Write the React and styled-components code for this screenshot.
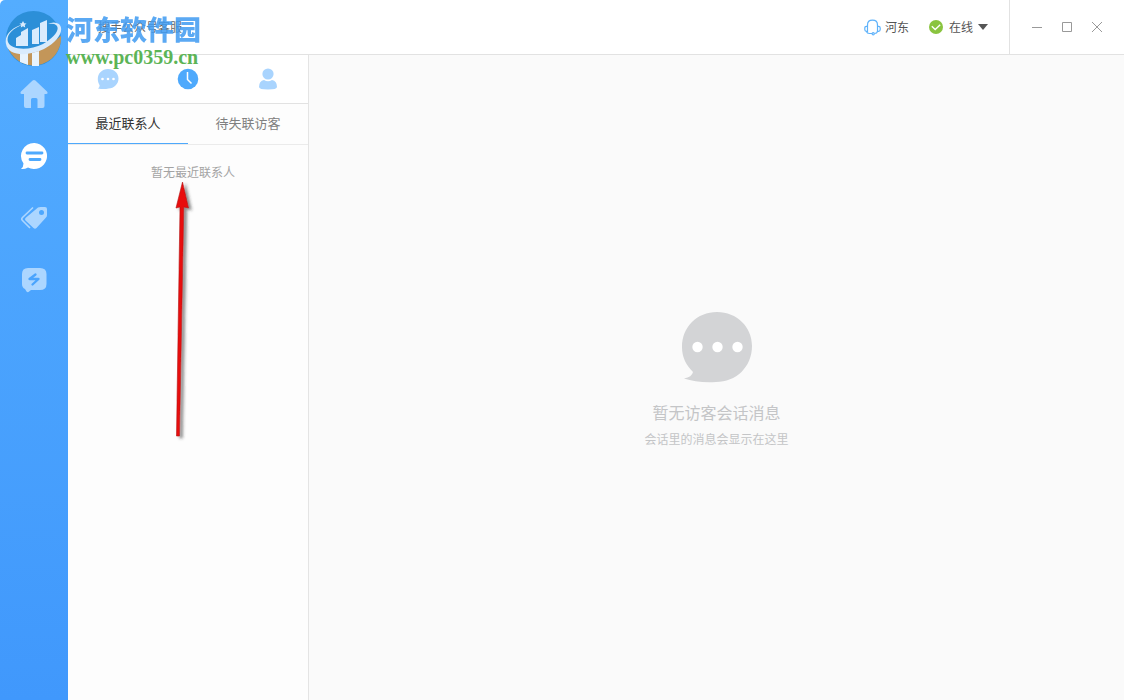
import React from "react";
import styled, { createGlobalStyle } from "styled-components";

const Global = createGlobalStyle`
  * { box-sizing: border-box; }
  html, body, #root { margin: 0; height: 100%; }
  body {
    font-family: "Noto Sans CJK SC", sans-serif;
    font-size: 12px;
    background: #fff;
    overflow: hidden;
  }
  button, select { font-family: inherit; }
  button { border: 0; padding: 0; background: none; cursor: pointer; }
`;

const Shell = styled.div`
  position: relative;
  display: flex;
  min-height: 100vh;
`;

const Sidebar = styled.nav`
  display: flex;
  flex-direction: column;
  align-items: center;
  gap: 30px;
  flex: 0 0 68px;
  padding-top: 78px;
  background: linear-gradient(#54adff, #4098fc);
  border-top-left-radius: 5px;
`;

const NavButton = styled.button`
  display: grid;
  place-items: center;
  width: 32px;
  height: 32px;
  color: ${(p) => (p.$active ? "#fff" : "#acd6ff")};
`;

const Main = styled.div`
  display: flex;
  flex-direction: column;
  flex: 1;
`;

const Header = styled.header`
  display: flex;
  align-items: center;
  height: 55px;
  padding-left: 30px;
  border-bottom: 1px solid #e2e2e2;
  background: #fff;
  color: #555;
`;

const Title = styled.h1`
  margin: 0;
  font-size: 12px;
  font-weight: 400;
  line-height: 18px;
  color: #666;
`;

const Account = styled.div`
  display: flex;
  align-items: center;
  gap: 20px;
  margin-left: auto;
  padding-right: 21px;
`;

const AccountItem = styled.div`
  display: flex;
  align-items: center;
  gap: 4px;
  line-height: 18px;
`;

const Status = styled.select`
  appearance: none;
  border: 0;
  padding: 0 16px 0 0;
  margin-left: 2px;
  width: 41px;
  height: 18px;
  font-size: 12px;
  line-height: 16px;
  color: #555;
  background: none;
`;

const StatusWrap = styled.div`
  display: flex;
  align-items: center;
  svg { margin-left: -12px; pointer-events: none; }
`;

const WindowControls = styled.div`
  display: flex;
  align-items: center;
  justify-content: center;
  align-self: stretch;
  gap: 10px;
  width: 115px;
  border-left: 1px solid #e2e2e2;
`;

const WindowButton = styled.button`
  display: grid;
  place-items: center;
  width: 20px;
  height: 20px;
  color: #999;
`;

const Body = styled.div`
  display: flex;
  flex: 1;
`;

const ContactPanel = styled.aside`
  flex: 0 0 241px;
  border-right: 1px solid #e4e4e4;
  background: #fdfdfd;
`;

const IconTabs = styled.div`
  display: grid;
  grid-template-columns: repeat(3, 1fr);
  height: 49px;
  border-bottom: 1px solid #e2e2e2;
  background: #fff;
`;

const IconTab = styled.button`
  display: grid;
  place-items: center;
  color: ${(p) => (p.$active ? "#4ea9fc" : "#a9d4fe")};
`;

const TextTabs = styled.div`
  display: grid;
  grid-template-columns: 1fr 1fr;
  height: 41px;
  border-bottom: 1px solid #ebebeb;
`;

const TextTab = styled.button`
  padding-bottom: 2px;
  font-size: 13px;
  line-height: 20px;
  color: ${(p) => (p.$active ? "#333" : "#808080")};
  box-shadow: ${(p) => (p.$active ? "inset 0 -1px #4ea9fc" : "none")};
`;

const NoContacts = styled.p`
  margin: 0;
  padding: 18px 0 0 10px;
  text-align: center;
  line-height: 18px;
  color: #a3a3a3;
`;

const Conversation = styled.main`
  display: flex;
  flex-direction: column;
  align-items: center;
  justify-content: center;
  flex: 1;
  padding-top: 4px;
  background: #fafafa;
  color: #c4c5c7;
`;

const EmptyTitle = styled.h2`
  margin: 17px 0 5px;
  font-size: 16px;
  font-weight: 400;
  line-height: 24px;
`;

const EmptyHint = styled.p`
  margin: 0;
  line-height: 20px;
`;

const Watermark = styled.div`
  position: absolute;
  top: 10px;
  left: 4px;
  display: flex;
  pointer-events: none;
`;

const WatermarkText = styled.div`
  display: flex;
  flex-direction: column;
  margin-left: 3px;
`;

const SiteName = styled.span`
  font-size: 27px;
  font-weight: 900;
  line-height: 37px;
  color: #3f9bf2;
  opacity: 0.85;
`;

const SiteUrl = styled.span`
  font-family: "Liberation Serif", serif;
  font-size: 20px;
  font-weight: 700;
  line-height: 20px;
  color: #5cb456;
`;

const Arrow = styled.svg`
  position: absolute;
  top: 179px;
  left: 168px;
  pointer-events: none;
`;

const SiteLogo = () => (
  <svg width="59" height="59" viewBox="0 0 59 59" aria-hidden="true">
    <circle cx="29.5" cy="28.5" r="27.5" fill="#2c8fd8" />
    <path d="M3 35C14 46 38 42 57 26A27.5 27.5 0 0 1 3 35Z" fill="#c39659" />
    <path d="M12 28L17 25V22L24 18V36H12ZM28 20L35 17V34H28ZM36 13L43 10V32H36Z" fill="#d9ebfd" />
    <path d="M16 43H24V55L16 52ZM28 43L35 41V56H28Z" fill="#e8f3fd" />
    <path d="M20 14C7 19 2 26 4 32C7 40 25 41 39 34C50 28 57 19 52 15Q50 13 44 14Q50 11 55 14C61 20 54 32 40 39C23 47 4 46 2 34C0 25 8 17 20 14Z" fill="#d9ebfd" />
    <path d="M19 11L20.2 13.2L22.5 13.5L20.8 15L21.2 17.5L19 16.3L16.8 17.5L17.2 15L15.5 13.5L17.8 13.2Z" fill="#d9ebfd" />
  </svg>
);

const HomeIcon = () => (
  <svg width="28" height="28" viewBox="0 0 28 28" fill="currentColor">
    <path d="M12.6.6Q14-.6 15.4.6L27 11.5Q28.500 14 26 14H24.500V26Q24.500 28 22.500 28H17.500V19.500Q17.500 18 16 18H12.500Q11 18 11 19.500V28H6Q4 28 4 26V14H2Q-.5 14 1 11.500Z" />
  </svg>
);

const MessageIcon = () => (
  <svg width="28" height="28" viewBox="0 0 28 28">
    <path d="M14.500 1A13 13 0 1 1 8 25.500Q4.500 27.500 1 27Q3.500 25 3.500 21.500A13 13 0 0 1 14.500 1Z" fill="currentColor" />
    <path d="M7 11H22M10 17.500H20" stroke="#4faafe" strokeWidth="2.800" strokeLinecap="round" />
  </svg>
);

const TagsIcon = () => (
  <svg width="28" height="28" viewBox="0 0 28 28">
    <path d="M18 3.500Q19 3 20.500 3H25Q27 3 27 5V11Q27 12.500 26 13.500L16.500 24Q15 25.500 13.500 24L5.500 16.500Q4.500 15 5.500 14Z" fill="currentColor" />
    <path d="M13 3.500L2.500 13.500Q1 15 2.500 16.500L10 24" fill="none" stroke="currentColor" strokeWidth="1.600" />
    <circle cx="21.5" cy="8.500" r="2.500" fill="#4da7fe" />
  </svg>
);

const QuickReplyIcon = () => (
  <svg width="28" height="28" viewBox="0 0 28 28">
    <path d="M8 2H20Q26.500 2 26.500 8V18Q26.500 24 20 24H11L8.500 26Q7.500 26.500 6.500 25.500L5 23Q2 21.500 2 18V8Q2 2 8 2Z" fill="currentColor" />
    <path d="M15.500 8.500L9.500 13H18.500L12.500 18.500" fill="none" stroke="#4aa4fd" strokeWidth="2.300" strokeLinejoin="round" strokeLinecap="round" />
  </svg>
);

const ChatIcon = () => (
  <svg width="22" height="22" viewBox="0 0 22 22">
    <path d="M11 1C17 1 21.500 5 21.500 10.500S17 20.500 11.500 20.500Q7 21.500 1 20.500Q3 19 2.500 17C-2 9 3 1 11 1Z" fill="currentColor" />
    <g fill="#fff"><circle cx="5.500" cy="11" r="1.300" /><circle cx="11" cy="11" r="1.300" /><circle cx="16.500" cy="11" r="1.300" /></g>
  </svg>
);

const ClockIcon = () => (
  <svg width="22" height="22" viewBox="0 0 22 22">
    <circle cx="11" cy="11" r="10.300" fill="currentColor" />
    <path d="M10.500 4V11.500L14.500 15.500" fill="none" stroke="#fff" strokeWidth="1.500" />
  </svg>
);

const PersonIcon = () => (
  <svg width="22" height="22" viewBox="0 0 22 22" fill="currentColor">
    <circle cx="11" cy="6" r="5.600" />
    <path d="M7 12Q11 14.500 15 12Q20 13 20 19Q20 21.500 11 21.500T2 19Q2 13 7 12Z" />
  </svg>
);

const HeadsetIcon = () => (
  <svg width="17" height="17" viewBox="0 0 17 17" fill="none" stroke="#5eb2fa" strokeWidth="1.200">
    <path d="M3.500 7V6C3.500 3 5.500 1.200 8.500 1.200S13.500 3 13.500 6V7" />
    <path d="M3.500 7.300H2.500Q.8 7.300 .8 9V10.500Q.8 12.300 2.500 12.300H3.500ZM13.500 7.300H14.500Q16.200 7.300 16.200 9V10.500Q16.200 12.300 14.500 12.300H13.500Z" />
    <path d="M2.500 12.500Q3 14.500 5.500 14.500H8M13.500 12.500Q13 14.500 10.500 14.500" />
    <circle cx="9.200" cy="14.800" r="1.100" />
  </svg>
);

const OnlineIcon = () => (
  <svg width="14" height="14" viewBox="0 0 14 14">
    <circle cx="7" cy="7" r="7" fill="#8ac43f" />
    <path d="M2.800 6.300L6.200 9.500L11.200 4.800" fill="none" stroke="#fff" strokeWidth="1.400" />
  </svg>
);

const EmptyChatIcon = () => (
  <svg width="72" height="72" viewBox="0 0 72 72">
    <path d="M36 1C56 1 71 16 71 35C71 56 55 71 35 71Q16 72 3 67.500Q11 66 12 61C5 54 1 46 1 36C1 16 16 1 36 1Z" fill="#d3d4d6" />
    <g fill="#fff"><circle cx="16.500" cy="36" r="5.200" /><circle cx="36.500" cy="36" r="5.200" /><circle cx="56.500" cy="36" r="5.200" /></g>
  </svg>
);

const navItems = [
  { label: "首页", Icon: HomeIcon },
  { label: "会话", Icon: MessageIcon, active: true },
  { label: "标签", Icon: TagsIcon },
  { label: "快捷回复", Icon: QuickReplyIcon },
];

const panelTabs = [
  { label: "会话", Icon: ChatIcon },
  { label: "最近", Icon: ClockIcon, active: true },
  { label: "访客", Icon: PersonIcon },
];

export default function App() {
  return (
    <Shell>
      <Global />
      <Sidebar>
        {navItems.map(({ label, Icon, active }) => (
          <NavButton key={label} aria-label={label} $active={active}><Icon /></NavButton>
        ))}
      </Sidebar>
      <Main>
        <Header>
          <Title>搜手公众号客服</Title>
          <Account>
            <AccountItem><HeadsetIcon />河东</AccountItem>
            <AccountItem>
              <OnlineIcon />
              <StatusWrap>
                <Status aria-label="状态"><option>在线</option></Status>
                <svg width="10" height="6" viewBox="0 0 10 6"><path d="M0 0H10L5 6Z" fill="#555" /></svg>
              </StatusWrap>
            </AccountItem>
          </Account>
          <WindowControls>
            <WindowButton aria-label="最小化">
              <svg width="12" height="12"><path d="M1 6.500H11" stroke="currentColor" /></svg>
            </WindowButton>
            <WindowButton aria-label="最大化">
              <svg width="12" height="12"><path d="M1.500 1.500H10.500V10.500H1.500Z" fill="none" stroke="currentColor" /></svg>
            </WindowButton>
            <WindowButton aria-label="关闭">
              <svg width="12" height="12"><path d="M1 1L11 11M11 1L1 11" stroke="currentColor" /></svg>
            </WindowButton>
          </WindowControls>
        </Header>
        <Body>
          <ContactPanel>
            <IconTabs>
              {panelTabs.map(({ label, Icon, active }) => (
                <IconTab key={label} aria-label={label} $active={active}><Icon /></IconTab>
              ))}
            </IconTabs>
            <TextTabs>
              <TextTab $active>最近联系人</TextTab>
              <TextTab>待失联访客</TextTab>
            </TextTabs>
            <NoContacts>暂无最近联系人</NoContacts>
          </ContactPanel>
          <Conversation>
            <EmptyChatIcon />
            <EmptyTitle>暂无访客会话消息</EmptyTitle>
            <EmptyHint>会话里的消息会显示在这里</EmptyHint>
          </Conversation>
        </Body>
      </Main>
      <Watermark>
        <SiteLogo />
        <WatermarkText>
          <SiteName>河东软件园</SiteName>
          <SiteUrl>www.pc0359.cn</SiteUrl>
        </WatermarkText>
      </Watermark>
      <Arrow width="32" height="266" viewBox="0 0 32 266" aria-hidden="true">
        <defs>
          <filter id="arrow-shadow" x="-50%" y="-5%" width="220%" height="110%">
            <feDropShadow dx="3" dy="2" stdDeviation="1.500" floodColor="#333" floodOpacity=".55" />
          </filter>
        </defs>
        <g filter="url(#arrow-shadow)">
          <path d="M14.500 3L20.500 29L15.800 28L11.500 257H8.500L12 28L8 29Z" fill="#e81010" stroke="#b31515" strokeWidth=".6" />
        </g>
      </Arrow>
    </Shell>
  );
}
